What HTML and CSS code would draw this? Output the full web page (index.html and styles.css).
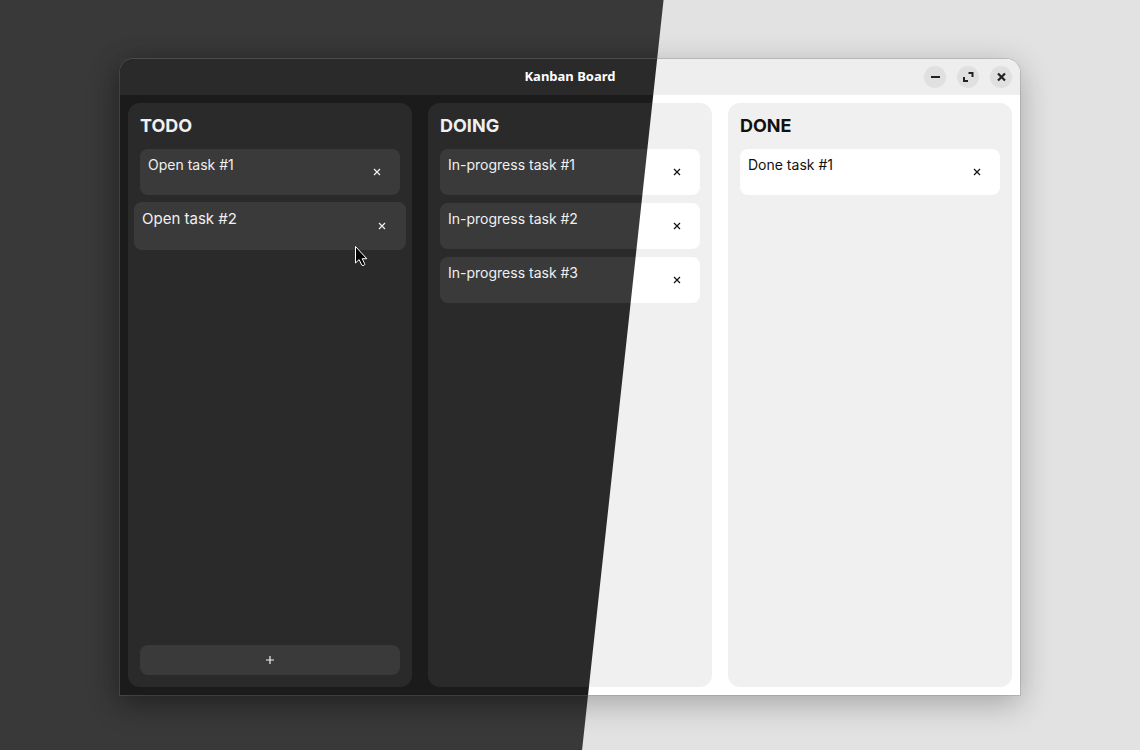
FILE: index.html
```html
<!DOCTYPE html>
<html lang="en">
<head>
<meta charset="utf-8">
<meta name="viewport" content="width=device-width, initial-scale=1">
<title>Kanban Board</title>
<link rel="stylesheet" href="styles.css">
</head>
<body>
<div class="window">
  <header class="titlebar">
    <h1 class="title">Kanban Board</h1>
    <div class="controls">
      <button class="control" type="button" aria-label="Minimize"><svg viewBox="0 0 22 22"><path d="M7 11h9" stroke-width="2"/></svg></button>
      <button class="control" type="button" aria-label="Maximize"><svg viewBox="0 0 22 22"><path d="M11.500 7h4v4M7 11v4h4" stroke-width="2"/></svg></button>
      <button class="control" type="button" aria-label="Close"><svg viewBox="0 0 22 22"><path d="M8 7.500l7 7M15 7.500l-7 7" stroke-width="2.200"/></svg></button>
    </div>
  </header>
  <main class="board">
    <section class="column">
      <h2 class="heading">TODO</h2>
      <ul class="cards">
        <li class="card"><p class="text">Open task #1</p><button class="remove" type="button" aria-label="Remove Open task #1"><svg viewBox="0 0 8 8"><path d="M1 1l6 6M7 1l-6 6"/></svg></button></li>
        <li class="card dragged"><p class="text">Open task #2</p><button class="remove" type="button" aria-label="Remove Open task #2"><svg viewBox="0 0 8 8"><path d="M1 1l6 6M7 1l-6 6"/></svg></button>
          <svg class="pointer" viewBox="0 0 14 22" aria-hidden="true"><path d="M1.500 1.500v16.500l3.600-3.400 2.800 5.600q1 .9 2.500-.2.600-.5.200-1.300l-2.400-5h4.600z"/></svg>
        </li>
      </ul>
      <button class="add" type="button" aria-label="Add task"><svg viewBox="0 0 8 8"><path d="M4 0v8M0 4h8"/></svg></button>
    </section>
    <section class="column">
      <h2 class="heading">DOING</h2>
      <ul class="cards">
        <li class="card"><p class="text">In-progress task #1</p><button class="remove on-light" type="button" aria-label="Remove In-progress task #1"><svg viewBox="0 0 8 8"><path d="M1 1l6 6M7 1l-6 6"/></svg></button></li>
        <li class="card"><p class="text">In-progress task #2</p><button class="remove on-light" type="button" aria-label="Remove In-progress task #2"><svg viewBox="0 0 8 8"><path d="M1 1l6 6M7 1l-6 6"/></svg></button></li>
        <li class="card"><p class="text">In-progress task #3</p><button class="remove on-light" type="button" aria-label="Remove In-progress task #3"><svg viewBox="0 0 8 8"><path d="M1 1l6 6M7 1l-6 6"/></svg></button></li>
      </ul>
    </section>
    <section class="column on-light">
      <h2 class="heading">DONE</h2>
      <ul class="cards">
        <li class="card"><p class="text">Done task #1</p><button class="remove on-light" type="button" aria-label="Remove Done task #1"><svg viewBox="0 0 8 8"><path d="M1 1l6 6M7 1l-6 6"/></svg></button></li>
      </ul>
    </section>
  </main>
</div>
</body>
</html>
```
FILE: styles.css
```css
/* Every surface shares one viewport-fixed diagonal between its dark and light colour. */
body, .window, .titlebar, .column, .card {
  background: linear-gradient(96.2deg, var(--dark) calc(50% + 52px), var(--light) calc(50% + 53px)) fixed;
}

* { box-sizing: border-box; }

body {
  --dark: #393939;
  --light: #e2e2e2;
  display: flex;
  min-height: 100vh;
  margin: 0;
  padding: 59px 120px 55px;
  color: #f0f0f0;
  font-family: Inter, "Liberation Sans", sans-serif;
}

.on-light { color: #111; }

.window {
  --dark: #1b1b1b;
  --light: #fff;
  position: relative;
  z-index: 0;
  display: flex;
  flex: 1;
  flex-direction: column;
  min-width: 0;
  border-radius: 14px 14px 0 0;
  box-shadow: 0 0 0 1px rgba(128, 128, 128, .3), 0 8px 32px rgba(0, 0, 0, .28);
}

/* Deeper shadow on the dark half */
.window::before {
  content: "";
  position: absolute;
  inset: 0;
  z-index: -1;
  border-radius: 14px 14px 0 0;
  box-shadow: 0 4px 26px rgba(0, 0, 0, .22);
  clip-path: polygon(-59px -59px, 543px -59px, 461px calc(100% + 59px), -59px calc(100% + 59px), -59px 100%, 0 100%, 468px 100%, 537px -1px, 0 -1px, 0 100%, -59px 100%);
}

.titlebar {
  --dark: #2a2a2a;
  --light: #eee;
  display: grid;
  grid-template-columns: 1fr auto 1fr;
  align-items: center;
  height: 36px;
  padding: 0 8px;
  border-radius: 14px 14px 0 0;
}

.title {
  grid-column: 2;
  margin: 0;
  padding-bottom: 2px;
  color: #fff;
  font-family: "Noto Sans", "Open Sans", sans-serif;
  font-size: 13px;
  font-weight: 700;
  line-height: 16px;
}

.controls {
  display: flex;
  gap: 11px;
  justify-content: flex-end;
}

button {
  display: grid;
  place-items: center;
  padding: 0;
  border: 0;
  background: none;
  color: inherit;
}

svg { fill: none; stroke: currentColor; }

.control {
  width: 22px;
  height: 22px;
  border-radius: 50%;
  background: #e0e0e0;
  color: #222;
}

.control svg { width: 22px; height: 22px; }

.board {
  display: grid;
  flex: 1;
  grid-template-columns: repeat(3, minmax(0, 1fr));
  gap: 16px;
  padding: 8px;
}

.column {
  --dark: #2a2a2a;
  --light: #f0f0f0;
  display: flex;
  flex-direction: column;
  padding: 12px;
  border-radius: 12px;
}

.heading {
  margin: 0 0 12px;
  font-size: 18px;
  font-weight: 700;
  line-height: 22px;
}

.cards {
  display: flex;
  flex: 1;
  flex-direction: column;
  gap: 8px;
  margin: 0;
  padding: 0;
  list-style: none;
}

.card {
  --dark: #3a3a3a;
  --light: #fff;
  display: flex;
  min-height: 46px;
  padding: 8px;
  border-radius: 8px;
}

.text {
  flex: 1;
  margin: 0;
  font-size: 14px;
  font-weight: 400;
  line-height: 16px;
}

.remove { width: 30px; height: 30px; }

.remove svg, .add svg {
  width: 8px;
  height: 8px;
  stroke-width: 1.2;
}

.dragged {
  position: relative;
  min-height: 48px;
  margin: -1px -6px;
}

.dragged .text {
  font-size: 15px;
  line-height: 18px;
}

.dragged .remove { width: 32px; height: 32px; }

.pointer {
  position: absolute;
  right: 38px;
  bottom: -17px;
  width: 14px;
  height: 22px;
  fill: #000;
  stroke: #fff;
}

.add {
  height: 30px;
  border-radius: 8px;
  background: #3a3a3a;
}
```
